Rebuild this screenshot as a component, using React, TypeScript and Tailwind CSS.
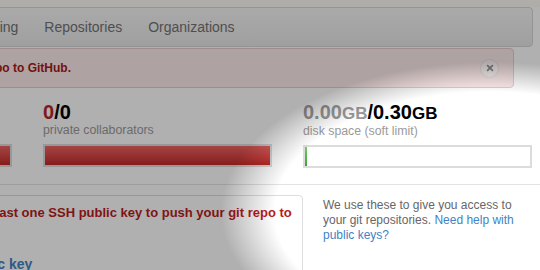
import React from 'react'

type Stat = {
  used: string
  total: string
  unit?: string
  label: string
  over: boolean
  percent: number
}

const stats: Stat[] = [
  { used: '0', total: '0', label: 'private repositories', over: true, percent: 100 },
  { used: '0', total: '0', label: 'private collaborators', over: true, percent: 100 },
  { used: '0.00', total: '0.30', unit: 'GB', label: 'disk space (soft limit)', over: false, percent: 0 },
]

const StatColumn: React.FC<{ s: Stat }> = ({ s }) => {
  return (
    <div className="w-[229px] shrink-0">
      <div className="text-[20px] leading-[21px] font-bold text-black whitespace-nowrap">
        <span className={s.over ? 'text-[#b62525]' : 'text-[#999]'}>
          {s.used}
          {s.unit && <span className="text-[17px]">{s.unit}</span>}
        </span>
        /{s.total}
        {s.unit && <span className="text-[17px]">{s.unit}</span>}
      </div>
      <div className="text-[12.3px] leading-[14px] text-[#9a9a9a]">{s.label}</div>
      <div className="mt-[7px] h-[23px] border-2 border-[#dcdcdc] bg-white">
        {s.over ? (
          <div className="h-full w-full bg-gradient-to-b from-[#ee6363] to-[#c22727]" />
        ) : (
          <div className="h-full w-[2px] bg-gradient-to-b from-[#6ccf5a] to-[#3fa33a]" />
        )}
      </div>
    </div>
  )
}

export default function App() {
  return (
    <div className="relative h-[270px] w-[540px] overflow-hidden bg-white font-['Liberation_Sans',Arial,sans-serif]">
      <div className="h-[7px] bg-[#fcfbf5]" />

      {/* tabs */}
      <nav className="ml-[-60px] flex h-[40px] w-[593px] items-center gap-[26px] rounded-[4px] border border-[#d6d6d6] bg-gradient-to-b from-[#f6f6f6] to-[#e7e7e7] pl-[40px] text-[14px] text-[#727272]">
        <span>Billing</span>
        <span>Repositories</span>
        <span>Organizations</span>
      </nav>

      {/* flash */}
      <div className="mt-px ml-[-60px] flex h-[40px] w-[574px] items-center rounded-[4px] border border-[#e6cccc] bg-[#fdeaea]">
        <div className="flex w-[130px] shrink-0 justify-end">
          <span className="whitespace-nowrap text-[12px] font-bold text-[#a61818]">
            You need to add a public key to push your repo to GitHub.
          </span>
        </div>
        <button className="mr-[14px] ml-auto flex h-[19px] w-[19px] items-center justify-center rounded-full border border-[#ecdede] bg-[#fbf3f3]">
          <svg viewBox="0 0 10 10" className="h-[8px] w-[8px]">
            <path d="M2 2 L8 8 M8 2 L2 8" stroke="#8a8a8a" strokeWidth="2.2" strokeLinecap="round" />
          </svg>
        </button>
      </div>

      {/* plan usage */}
      <div className="border-b border-[#e3e3e3] pt-[14px] pb-[16px]">
        <div className="ml-[-217px] flex gap-[31px]">
          {stats.map((s) => (
            <StatColumn key={s.label} s={s} />
          ))}
        </div>
      </div>

      {/* keys */}
      <div className="mt-[10px] ml-[-101px] flex items-start gap-[20px]">
        <div className="h-[120px] w-[404px] shrink-0 rounded-[4px] border border-[#dddddd] pt-[9px] pr-[8px] pl-[12px]">
          <p className="text-[13px] leading-[16px] font-bold text-[#b81c1c]">
            You need at least one SSH public key to push your git repo to GitHub.
          </p>
          <a className="mt-[18px] ml-[9px] block whitespace-nowrap text-[14px] leading-[18px] font-bold text-[#4183c4]">
            Add a public key
          </a>
        </div>
        <p className="w-[200px] pt-[3px] text-[12px] leading-[15px] text-[#666]">
          We use these to give you access to your git repositories.{' '}
          <a className="text-[#4183c4]">Need help with public keys?</a>
        </p>
      </div>

      {/* spotlight vignette */}
      <div className="pointer-events-none absolute inset-0 bg-[radial-gradient(ellipse_269px_150px_at_490px_212px,rgba(0,0,0,0)_80%,rgba(0,0,0,0.31)_100%)]" />
    </div>
  )
}
